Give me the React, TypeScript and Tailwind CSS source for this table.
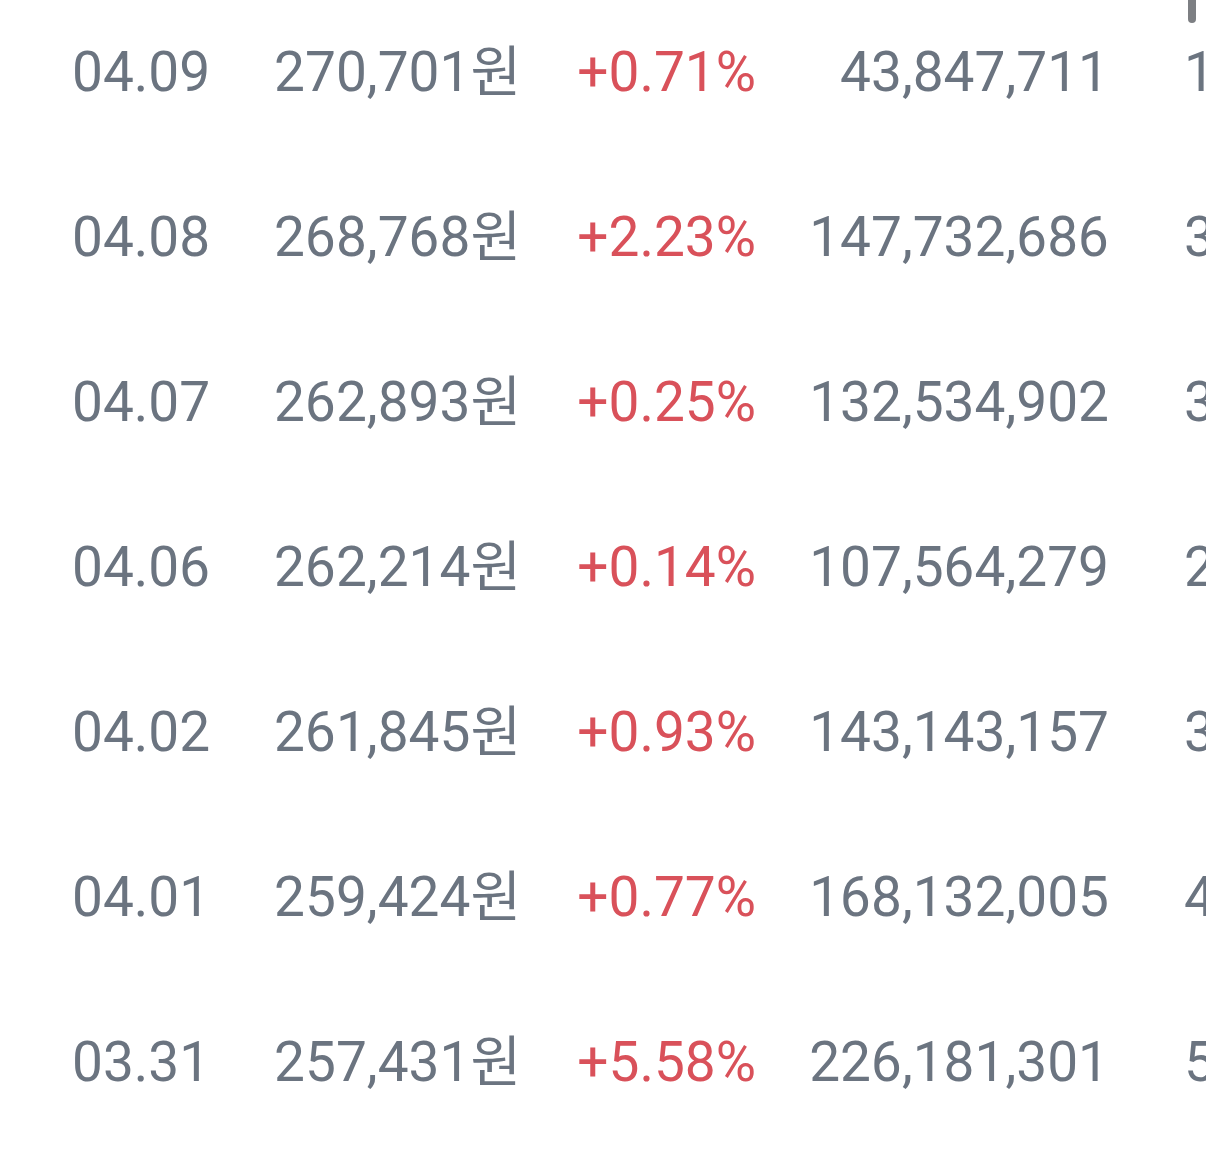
const rows = [
  { date: '04.09', price: '270,701원', change: '+0.71%', volume: '43,847,711', amount: '11,869억' },
  { date: '04.08', price: '268,768원', change: '+2.23%', volume: '147,732,686', amount: '39,705억' },
  { date: '04.07', price: '262,893원', change: '+0.25%', volume: '132,534,902', amount: '34,842억' },
  { date: '04.06', price: '262,214원', change: '+0.14%', volume: '107,564,279', amount: '28,205억' },
  { date: '04.02', price: '261,845원', change: '+0.93%', volume: '143,143,157', amount: '37,481억' },
  { date: '04.01', price: '259,424원', change: '+0.77%', volume: '168,132,005', amount: '43,617억' },
  { date: '03.31', price: '257,431원', change: '+5.58%', volume: '226,181,301', amount: '58,226억' },
]

export default function App() {
  return (
    <div className="relative h-[1163px] w-[1206px] overflow-hidden bg-white font-['Roboto','Noto_Sans_CJK_KR',sans-serif] text-[55px] tabular-nums text-[#6b7480]">
      {/* scrollbar thumb */}
      <div className="absolute right-[10px] top-0 h-[23px] w-[8px] rounded-b-full bg-[#7d7f83]" />

      <div className="-mt-[10px] flex flex-col">
        {rows.map((r) => (
          <div key={r.date} className="flex h-[165px] items-center whitespace-nowrap">
            <span className="w-[210px] shrink-0 pl-[72px]">{r.date}</span>
            <span className="w-[311px] shrink-0 text-right">{r.price}</span>
            <span className="w-[235px] shrink-0 text-right text-[#d9515a]">{r.change}</span>
            <span className="w-[353px] shrink-0 text-right">{r.volume}</span>
            <span className="shrink-0 pl-[75px]">{r.amount}</span>
          </div>
        ))}
      </div>
    </div>
  )
}
